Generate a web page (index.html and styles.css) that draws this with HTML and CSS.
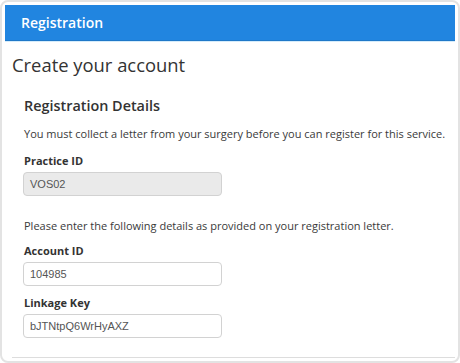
FILE: index.html
```html
<!DOCTYPE html>
<html>
<head>
<meta charset="utf-8">
<link rel="stylesheet" href="styles.css">
</head>
<body>
<div class="frame">
  <div class="header">Registration</div>
  <div class="main">
    <h1 class="title">Create your account</h1>
    <div class="details">
      <h2 class="subtitle">Registration Details</h2>
      <p class="text first">You must collect a letter from your surgery before you can register for this service.</p>
      <label class="label">Practice ID</label>
      <div class="input disabled">VOS02</div>
      <p class="text second">Please enter the following details as provided on your registration letter.</p>
      <label class="label">Account ID</label>
      <div class="input">104985</div>
      <label class="label gap">Linkage Key</label>
      <div class="input">bJTNtpQ6WrHyAXZ</div>
    </div>
    <div class="rule"></div>
  </div>
</div>
</body>
</html>
```

FILE: styles.css
```css
html, body {
  margin: 0;
  padding: 0;
  background: #ffffff;
}
.frame {
  width: 460px;
  height: 363px;
  box-sizing: border-box;
  border: 2px solid #e3e3e3;
  border-radius: 8px;
  padding: 3px 3px 0 3px;
  font-family: "Open Sans", "Noto Sans", sans-serif;
  color: #333333;
  overflow: hidden;
}
.header {
  height: 35px;
  line-height: 36px;
  background: #2185e0;
  border-bottom: 1px solid #1f78c8;
  box-shadow: 0 1px 0 #d5ecfb;
  color: #ffffff;
  font-size: 14px;
  font-weight: 600;
  padding-left: 16px;
}
.main {
  padding-left: 7px;
  display: flex;
  flex-direction: column;
}
.title {
  margin: 12px 0 0 0;
  font-size: 18.4px;
  font-weight: 400;
  line-height: 24px;
  color: #333333;
}
.details {
  padding-left: 12px;
  display: flex;
  flex-direction: column;
  align-items: flex-start;
}
.subtitle {
  margin: 19px 0 0 0;
  font-size: 14.4px;
  font-weight: 600;
  line-height: 20px;
  color: #333333;
}
.text {
  margin: 0;
  font-size: 11px;
  line-height: 17px;
  color: #3a3a3a;
  white-space: nowrap;
}
.text.first {
  margin-top: 9px;
}
.text.second {
  margin-top: 21px;
}
.label {
  margin-top: 10px;
  font-size: 11px;
  font-weight: 700;
  line-height: 17px;
  color: #333333;
}
.text.second + .label {
  margin-top: 8px;
}
.label.gap {
  margin-top: 8px;
}
.input {
  box-sizing: border-box;
  width: 199px;
  height: 24px;
  margin-top: 3px;
  margin-left: -1px;
  border: 1px solid #d2d2d2;
  border-radius: 4px;
  padding: 0 6px;
  font-family: "Liberation Sans", Arial, sans-serif;
  font-size: 11px;
  line-height: 22px;
  color: #555555;
  background: #ffffff;
}
.input.disabled {
  background: #eaeaea;
}
.rule {
  margin-top: 19px;
  height: 0;
  border-top: 1px solid #dddddd;
}
```
